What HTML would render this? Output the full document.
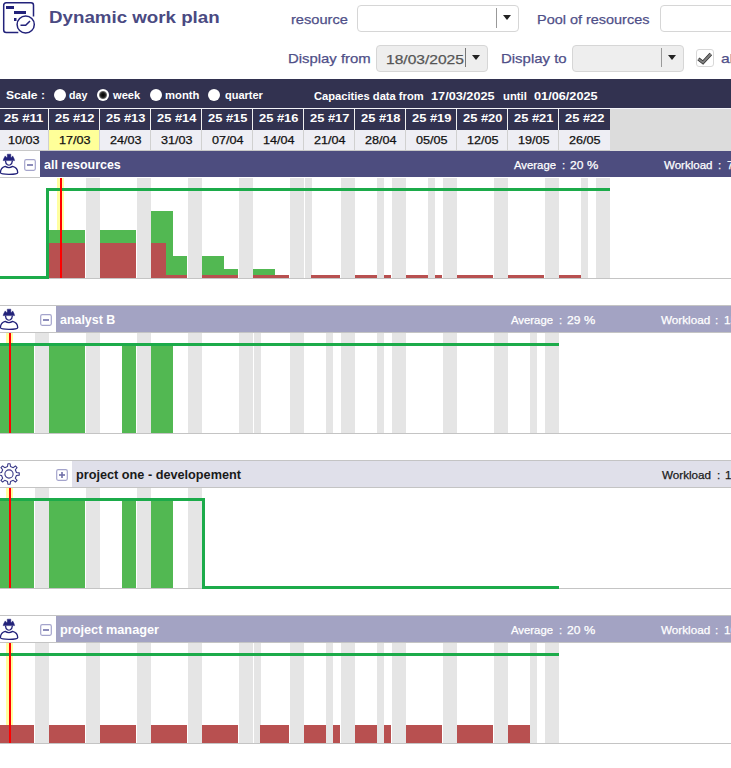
<!DOCTYPE html><html><head><meta charset="utf-8"><style>
html,body{margin:0;padding:0;background:#fff;width:731px;height:768px;overflow:hidden;position:relative;font-family:"Liberation Sans",sans-serif;}
.t{position:absolute;white-space:nowrap;line-height:1;}
.n{-webkit-text-stroke:0.25px currentColor;}
</style></head><body>
<svg style="position:absolute;left:0;top:0" width="40" height="36" viewBox="0 0 40 36">
<g fill="none" stroke="#22227a" stroke-width="1.5">
<path d="M18.3 32.4 H6.2 Q3.7 32.4 3.7 29.9 V5.3 Q3.7 2.8 6.2 2.8 H31 Q33.5 2.8 33.5 5.3 V16.4"/>
<circle cx="25.7" cy="24.5" r="8.6"/>
<path d="M20.5 25.3 H25.7 L30 21"/>
</g>
<g fill="#22227a">
<rect x="6" y="6" width="8" height="3"/>
<rect x="14" y="11" width="12" height="3"/>
<rect x="14" y="18" width="2.5" height="3"/>
</g></svg>
<div class="t" style="left:49.10px;top:9.11px;font-size:17.0px;color:#4a4a82;font-weight:bold;transform:scaleX(1.1016);transform-origin:0 0;">Dynamic work plan</div>
<div class="t n" style="left:290.50px;top:12.57px;font-size:13.5px;color:#4f4f88;font-weight:normal;transform:scaleX(1.0838);transform-origin:0 0;">resource</div>
<div style="position:absolute;left:357px;top:5px;width:160px;height:25px;border:1px solid #d6d6d6;border-radius:4px;background:#fff"></div>
<div style="position:absolute;left:496px;top:8px;width:1px;height:20px;background:#999;"></div>
<div style="position:absolute;left:503px;top:15px;width:0;height:0;border-left:4px solid transparent;border-right:4px solid transparent;border-top:5px solid #222"></div>
<div class="t n" style="left:537.00px;top:12.57px;font-size:13.5px;color:#4f4f88;font-weight:normal;transform:scaleX(1.0700);transform-origin:0 0;">Pool of resources</div>
<div style="position:absolute;left:660px;top:5px;width:160px;height:25px;border:1px solid #d6d6d6;border-radius:4px;background:#fff"></div>
<div class="t n" style="left:288.00px;top:51.97px;font-size:13.5px;color:#4f4f88;font-weight:normal;transform:scaleX(1.1013);transform-origin:0 0;">Display from</div>
<div style="position:absolute;left:376px;top:45px;width:110px;height:25px;border:1px solid #d6d6d6;border-radius:4px;background:#eeeeee"></div>
<div class="t n" style="left:386.40px;top:52.57px;font-size:13.5px;color:#555;font-weight:normal;transform:scaleX(1.1532);transform-origin:0 0;">18/03/2025</div>
<div style="position:absolute;left:465px;top:48px;width:1px;height:19px;background:#777;"></div>
<div style="position:absolute;left:472px;top:55px;width:0;height:0;border-left:4px solid transparent;border-right:4px solid transparent;border-top:5px solid #222"></div>
<div class="t n" style="left:500.90px;top:51.97px;font-size:13.5px;color:#4f4f88;font-weight:normal;transform:scaleX(1.1072);transform-origin:0 0;">Display to</div>
<div style="position:absolute;left:572px;top:45px;width:110px;height:25px;border:1px solid #d6d6d6;border-radius:4px;background:#eeeeee"></div>
<div style="position:absolute;left:661px;top:48px;width:1px;height:19px;background:#999;"></div>
<div style="position:absolute;left:668px;top:55px;width:0;height:0;border-left:4px solid transparent;border-right:4px solid transparent;border-top:5px solid #222"></div>
<div style="position:absolute;left:696px;top:49px;width:16px;height:16px;border:1px solid #d8d8d8;border-radius:3px;background:#fff"></div>
<svg style="position:absolute;left:696px;top:49px" width="18" height="18" viewBox="0 0 18 18"><path d="M2.4 9.9 L7 13.5 L14.8 5" fill="none" stroke="#333" stroke-width="3.4" stroke-linejoin="miter"/><path d="M2.4 9.9 L7 13.5 L14.8 5" fill="none" stroke="#808080" stroke-width="1.9"/></svg>
<div class="t n" style="left:721.00px;top:51.97px;font-size:13.5px;color:#4f4f88;font-weight:normal;transform:scaleX(1.1619);transform-origin:0 0;">al</div>
<div style="position:absolute;left:0px;top:79px;width:731px;height:29px;background:#323250;"></div>
<div style="position:absolute;left:0px;top:108px;width:731px;height:1px;background:#f4f4f8;"></div>
<div class="t" style="left:6.00px;top:89.18px;font-size:11.6px;color:#fff;font-weight:bold;transform:scaleX(1.0428);transform-origin:0 0;">Scale :</div>
<div style="position:absolute;left:54px;top:89px;width:12px;height:12px;border-radius:50%;background:#fff"></div>
<div class="t" style="left:69.40px;top:89.18px;font-size:11.6px;color:#fff;font-weight:bold;transform:scaleX(0.9150);transform-origin:0 0;">day</div>
<div style="position:absolute;left:97px;top:89px;width:12px;height:12px;border-radius:50%;background:radial-gradient(circle,#000 0,#222 2.5px,#666 3.5px,#fff 4.5px)"></div>
<div class="t" style="left:112.75px;top:89.18px;font-size:11.6px;color:#fff;font-weight:bold;transform:scaleX(0.9579);transform-origin:0 0;">week</div>
<div style="position:absolute;left:150px;top:89px;width:12px;height:12px;border-radius:50%;background:#fff"></div>
<div class="t" style="left:164.60px;top:89.18px;font-size:11.6px;color:#fff;font-weight:bold;transform:scaleX(0.9704);transform-origin:0 0;">month</div>
<div style="position:absolute;left:208px;top:89px;width:12px;height:12px;border-radius:50%;background:#fff"></div>
<div class="t" style="left:224.50px;top:89.18px;font-size:11.6px;color:#fff;font-weight:bold;transform:scaleX(0.9487);transform-origin:0 0;">quarter</div>
<div class="t" style="left:313.50px;top:89.98px;font-size:11.6px;color:#fff;font-weight:bold;transform:scaleX(0.9614);transform-origin:0 0;">Capacities data from</div>
<div class="t" style="left:431.40px;top:89.98px;font-size:11.6px;color:#fff;font-weight:bold;transform:scaleX(1.0956);transform-origin:0 0;">17/03/2025</div>
<div class="t" style="left:502.80px;top:89.98px;font-size:11.6px;color:#fff;font-weight:bold;transform:scaleX(0.9714);transform-origin:0 0;">until</div>
<div class="t" style="left:534.00px;top:89.98px;font-size:11.6px;color:#fff;font-weight:bold;transform:scaleX(1.0956);transform-origin:0 0;">01/06/2025</div>
<div style="position:absolute;left:0px;top:109px;width:731px;height:42px;background:#dcdcdc;"></div>
<div style="position:absolute;left:0px;top:109px;width:48px;height:21px;background:#323250;"></div>
<div style="position:absolute;left:0px;top:130px;width:48px;height:20px;background:#eeeef4;"></div>
<div style="position:absolute;left:48px;top:109px;width:1px;height:21px;background:#f0f0f0;"></div>
<div style="position:absolute;left:48px;top:130px;width:1px;height:21px;background:#d0d0d0;"></div>
<div class="t" style="left:4.20px;top:112.18px;font-size:11.6px;color:#fff;font-weight:bold;transform:scaleX(1.1306);transform-origin:0 0;">25 #11</div>
<div class="t n" style="left:8.10px;top:134.08px;font-size:11.6px;color:#111;font-weight:normal;transform:scaleX(1.0878);transform-origin:0 0;">10/03</div>
<div style="position:absolute;left:49px;top:109px;width:50px;height:21px;background:#323250;"></div>
<div style="position:absolute;left:49px;top:130px;width:50px;height:20px;background:#ffff99;"></div>
<div style="position:absolute;left:99px;top:109px;width:1px;height:21px;background:#f0f0f0;"></div>
<div style="position:absolute;left:99px;top:130px;width:1px;height:21px;background:#d0d0d0;"></div>
<div class="t" style="left:55.20px;top:112.18px;font-size:11.6px;color:#fff;font-weight:bold;transform:scaleX(1.1099);transform-origin:0 0;">25 #12</div>
<div class="t n" style="left:59.10px;top:134.08px;font-size:11.6px;color:#111;font-weight:normal;transform:scaleX(1.0878);transform-origin:0 0;">17/03</div>
<div style="position:absolute;left:100px;top:109px;width:50px;height:21px;background:#323250;"></div>
<div style="position:absolute;left:100px;top:130px;width:50px;height:20px;background:#eeeef4;"></div>
<div style="position:absolute;left:150px;top:109px;width:1px;height:21px;background:#f0f0f0;"></div>
<div style="position:absolute;left:150px;top:130px;width:1px;height:21px;background:#d0d0d0;"></div>
<div class="t" style="left:106.20px;top:112.18px;font-size:11.6px;color:#fff;font-weight:bold;transform:scaleX(1.1099);transform-origin:0 0;">25 #13</div>
<div class="t n" style="left:110.10px;top:134.08px;font-size:11.6px;color:#111;font-weight:normal;transform:scaleX(1.0878);transform-origin:0 0;">24/03</div>
<div style="position:absolute;left:151px;top:109px;width:50px;height:21px;background:#323250;"></div>
<div style="position:absolute;left:151px;top:130px;width:50px;height:20px;background:#eeeef4;"></div>
<div style="position:absolute;left:201px;top:109px;width:1px;height:21px;background:#f0f0f0;"></div>
<div style="position:absolute;left:201px;top:130px;width:1px;height:21px;background:#d0d0d0;"></div>
<div class="t" style="left:157.20px;top:112.18px;font-size:11.6px;color:#fff;font-weight:bold;transform:scaleX(1.1099);transform-origin:0 0;">25 #14</div>
<div class="t n" style="left:161.10px;top:134.08px;font-size:11.6px;color:#111;font-weight:normal;transform:scaleX(1.0878);transform-origin:0 0;">31/03</div>
<div style="position:absolute;left:202px;top:109px;width:50px;height:21px;background:#323250;"></div>
<div style="position:absolute;left:202px;top:130px;width:50px;height:20px;background:#eeeef4;"></div>
<div style="position:absolute;left:252px;top:109px;width:1px;height:21px;background:#f0f0f0;"></div>
<div style="position:absolute;left:252px;top:130px;width:1px;height:21px;background:#d0d0d0;"></div>
<div class="t" style="left:208.20px;top:112.18px;font-size:11.6px;color:#fff;font-weight:bold;transform:scaleX(1.1099);transform-origin:0 0;">25 #15</div>
<div class="t n" style="left:212.10px;top:134.08px;font-size:11.6px;color:#111;font-weight:normal;transform:scaleX(1.0878);transform-origin:0 0;">07/04</div>
<div style="position:absolute;left:253px;top:109px;width:50px;height:21px;background:#323250;"></div>
<div style="position:absolute;left:253px;top:130px;width:50px;height:20px;background:#eeeef4;"></div>
<div style="position:absolute;left:303px;top:109px;width:1px;height:21px;background:#f0f0f0;"></div>
<div style="position:absolute;left:303px;top:130px;width:1px;height:21px;background:#d0d0d0;"></div>
<div class="t" style="left:259.20px;top:112.18px;font-size:11.6px;color:#fff;font-weight:bold;transform:scaleX(1.1099);transform-origin:0 0;">25 #16</div>
<div class="t n" style="left:263.10px;top:134.08px;font-size:11.6px;color:#111;font-weight:normal;transform:scaleX(1.0878);transform-origin:0 0;">14/04</div>
<div style="position:absolute;left:304px;top:109px;width:50px;height:21px;background:#323250;"></div>
<div style="position:absolute;left:304px;top:130px;width:50px;height:20px;background:#eeeef4;"></div>
<div style="position:absolute;left:354px;top:109px;width:1px;height:21px;background:#f0f0f0;"></div>
<div style="position:absolute;left:354px;top:130px;width:1px;height:21px;background:#d0d0d0;"></div>
<div class="t" style="left:310.20px;top:112.18px;font-size:11.6px;color:#fff;font-weight:bold;transform:scaleX(1.1099);transform-origin:0 0;">25 #17</div>
<div class="t n" style="left:314.10px;top:134.08px;font-size:11.6px;color:#111;font-weight:normal;transform:scaleX(1.0878);transform-origin:0 0;">21/04</div>
<div style="position:absolute;left:355px;top:109px;width:50px;height:21px;background:#323250;"></div>
<div style="position:absolute;left:355px;top:130px;width:50px;height:20px;background:#eeeef4;"></div>
<div style="position:absolute;left:405px;top:109px;width:1px;height:21px;background:#f0f0f0;"></div>
<div style="position:absolute;left:405px;top:130px;width:1px;height:21px;background:#d0d0d0;"></div>
<div class="t" style="left:361.20px;top:112.18px;font-size:11.6px;color:#fff;font-weight:bold;transform:scaleX(1.1099);transform-origin:0 0;">25 #18</div>
<div class="t n" style="left:365.10px;top:134.08px;font-size:11.6px;color:#111;font-weight:normal;transform:scaleX(1.0878);transform-origin:0 0;">28/04</div>
<div style="position:absolute;left:406px;top:109px;width:50px;height:21px;background:#323250;"></div>
<div style="position:absolute;left:406px;top:130px;width:50px;height:20px;background:#eeeef4;"></div>
<div style="position:absolute;left:456px;top:109px;width:1px;height:21px;background:#f0f0f0;"></div>
<div style="position:absolute;left:456px;top:130px;width:1px;height:21px;background:#d0d0d0;"></div>
<div class="t" style="left:412.20px;top:112.18px;font-size:11.6px;color:#fff;font-weight:bold;transform:scaleX(1.1099);transform-origin:0 0;">25 #19</div>
<div class="t n" style="left:416.10px;top:134.08px;font-size:11.6px;color:#111;font-weight:normal;transform:scaleX(1.0878);transform-origin:0 0;">05/05</div>
<div style="position:absolute;left:457px;top:109px;width:50px;height:21px;background:#323250;"></div>
<div style="position:absolute;left:457px;top:130px;width:50px;height:20px;background:#eeeef4;"></div>
<div style="position:absolute;left:507px;top:109px;width:1px;height:21px;background:#f0f0f0;"></div>
<div style="position:absolute;left:507px;top:130px;width:1px;height:21px;background:#d0d0d0;"></div>
<div class="t" style="left:463.20px;top:112.18px;font-size:11.6px;color:#fff;font-weight:bold;transform:scaleX(1.1099);transform-origin:0 0;">25 #20</div>
<div class="t n" style="left:467.10px;top:134.08px;font-size:11.6px;color:#111;font-weight:normal;transform:scaleX(1.0878);transform-origin:0 0;">12/05</div>
<div style="position:absolute;left:508px;top:109px;width:50px;height:21px;background:#323250;"></div>
<div style="position:absolute;left:508px;top:130px;width:50px;height:20px;background:#eeeef4;"></div>
<div style="position:absolute;left:558px;top:109px;width:1px;height:21px;background:#f0f0f0;"></div>
<div style="position:absolute;left:558px;top:130px;width:1px;height:21px;background:#d0d0d0;"></div>
<div class="t" style="left:514.20px;top:112.18px;font-size:11.6px;color:#fff;font-weight:bold;transform:scaleX(1.1099);transform-origin:0 0;">25 #21</div>
<div class="t n" style="left:518.10px;top:134.08px;font-size:11.6px;color:#111;font-weight:normal;transform:scaleX(1.0878);transform-origin:0 0;">19/05</div>
<div style="position:absolute;left:559px;top:109px;width:50px;height:21px;background:#323250;"></div>
<div style="position:absolute;left:559px;top:130px;width:50px;height:20px;background:#eeeef4;"></div>
<div style="position:absolute;left:609px;top:109px;width:1px;height:21px;background:#323250;"></div>
<div style="position:absolute;left:609px;top:130px;width:1px;height:20px;background:#eeeef4;"></div>
<div class="t" style="left:565.20px;top:112.18px;font-size:11.6px;color:#fff;font-weight:bold;transform:scaleX(1.1099);transform-origin:0 0;">25 #22</div>
<div class="t n" style="left:569.10px;top:134.08px;font-size:11.6px;color:#111;font-weight:normal;transform:scaleX(1.0878);transform-origin:0 0;">26/05</div>
<div style="position:absolute;left:0px;top:150px;width:610px;height:1px;background:#c8c8c8;"></div>
<div style="position:absolute;left:0px;top:151px;width:40px;height:26px;background:#fff;"></div>
<div style="position:absolute;left:40px;top:151px;width:691px;height:26px;background:#4d4d7f;"></div>
<div style="position:absolute;left:0px;top:177px;width:40px;height:1px;background:#c8c8c8;"></div>
<svg style="position:absolute;left:0px;top:152px" width="20" height="24" viewBox="0 0 20 24">
<path d="M3.1 8.6 L3.8 6.6 L5.2 3.9 L6.5 5.6 L7.3 5.3 V2.2 H10.8 V5.3 L11.5 5.6 L12.7 3.9 L14 6.6 L14.6 8.6 Z" fill="#22227a" stroke="#22227a" stroke-width="0.5" stroke-linejoin="round"/>
<path d="M5.4 8.6 Q5.6 11.5 7.5 12.8 Q8.9 13.6 10.3 12.8 Q12.2 11.5 12.4 8.6" fill="none" stroke="#22227a" stroke-width="1.3"/>
<path d="M5.2 14.4 Q8.9 16.8 12.6 14.4 Q17.6 15.6 17.7 20.6 Q17.6 22.2 9 22.3 Q0.4 22.2 0.4 20.6 Q0.6 15.6 5.2 14.4 Z" fill="none" stroke="#22227a" stroke-width="1.3"/>
</svg>
<svg style="position:absolute;left:24px;top:159px" width="12" height="12" viewBox="0 0 12 12">
<rect x="0.7" y="0.7" width="10.6" height="10.6" rx="1.5" fill="#fff" stroke="#a4a4cc" stroke-width="1.2"/>
<rect x="3" y="5.2" width="6" height="1.6" fill="#7070a8"/></svg>
<div class="t" style="left:43.90px;top:158.74px;font-size:12px;color:#fff;font-weight:bold;transform:scaleX(1.0371);transform-origin:0 0;">all resources</div>
<div class="t n" style="left:514.20px;top:159.28px;font-size:11.6px;color:#fff;font-weight:normal;transform:scaleX(0.9767);transform-origin:0 0;">Average</div>
<div class="t n" style="left:561.60px;top:159.28px;font-size:11.6px;color:#fff;font-weight:normal;transform:scaleX(0.9767);transform-origin:0 0;">:</div>
<div class="t n" style="left:569.60px;top:159.28px;font-size:11.6px;color:#fff;font-weight:normal;transform:scaleX(1.0388);transform-origin:0 0;">20</div>
<div class="t n" style="left:587.00px;top:159.28px;font-size:11.6px;color:#fff;font-weight:normal;transform:scaleX(1.0971);transform-origin:0 0;">%</div>
<div class="t n" style="left:664.30px;top:159.28px;font-size:11.6px;color:#fff;font-weight:normal;transform:scaleX(0.9939);transform-origin:0 0;">Workload</div>
<div class="t n" style="left:718.40px;top:159.28px;font-size:11.6px;color:#fff;font-weight:normal;transform:scaleX(0.9939);transform-origin:0 0;">:</div>
<div class="t n" style="left:727.00px;top:159.28px;font-size:11.6px;color:#fff;font-weight:normal;transform:scaleX(0.9939);transform-origin:0 0;">7</div>
<div style="position:absolute;left:86px;top:178px;width:14px;height:100px;background:#e5e5e5;"></div>
<div style="position:absolute;left:137px;top:178px;width:14px;height:100px;background:#e5e5e5;"></div>
<div style="position:absolute;left:188px;top:178px;width:14px;height:100px;background:#e5e5e5;"></div>
<div style="position:absolute;left:239px;top:178px;width:14px;height:100px;background:#e5e5e5;"></div>
<div style="position:absolute;left:290px;top:178px;width:14px;height:100px;background:#e5e5e5;"></div>
<div style="position:absolute;left:305px;top:178px;width:7px;height:100px;background:#e5e5e5;"></div>
<div style="position:absolute;left:341px;top:178px;width:14px;height:100px;background:#e5e5e5;"></div>
<div style="position:absolute;left:377px;top:178px;width:7px;height:100px;background:#e5e5e5;"></div>
<div style="position:absolute;left:392px;top:178px;width:14px;height:100px;background:#e5e5e5;"></div>
<div style="position:absolute;left:428px;top:178px;width:7px;height:100px;background:#e5e5e5;"></div>
<div style="position:absolute;left:443px;top:178px;width:14px;height:100px;background:#e5e5e5;"></div>
<div style="position:absolute;left:494px;top:178px;width:14px;height:100px;background:#e5e5e5;"></div>
<div style="position:absolute;left:545px;top:178px;width:14px;height:100px;background:#e5e5e5;"></div>
<div style="position:absolute;left:581px;top:178px;width:7px;height:100px;background:#e5e5e5;"></div>
<div style="position:absolute;left:596px;top:178px;width:14px;height:100px;background:#e5e5e5;"></div>
<div style="position:absolute;left:57px;top:178px;width:7px;height:100px;background:#ffffa0;"></div>
<div style="position:absolute;left:49px;top:230px;width:36px;height:48px;background:#52b852;"></div>
<div style="position:absolute;left:100px;top:230px;width:36px;height:48px;background:#52b852;"></div>
<div style="position:absolute;left:151px;top:211px;width:22px;height:67px;background:#52b852;"></div>
<div style="position:absolute;left:173px;top:256px;width:14px;height:22px;background:#52b852;"></div>
<div style="position:absolute;left:202px;top:256px;width:22px;height:22px;background:#52b852;"></div>
<div style="position:absolute;left:224px;top:269px;width:14px;height:9px;background:#52b852;"></div>
<div style="position:absolute;left:253px;top:269px;width:22px;height:9px;background:#52b852;"></div>
<div style="position:absolute;left:49px;top:243px;width:36px;height:35px;background:#b85050;"></div>
<div style="position:absolute;left:100px;top:243px;width:36px;height:35px;background:#b85050;"></div>
<div style="position:absolute;left:151px;top:243px;width:15px;height:35px;background:#b85050;"></div>
<div style="position:absolute;left:166px;top:275px;width:21px;height:3px;background:#b85050;"></div>
<div style="position:absolute;left:202px;top:275px;width:36px;height:3px;background:#b85050;"></div>
<div style="position:absolute;left:253px;top:275px;width:36px;height:3px;background:#b85050;"></div>
<div style="position:absolute;left:311px;top:275px;width:29px;height:3px;background:#b85050;"></div>
<div style="position:absolute;left:355px;top:275px;width:22px;height:3px;background:#b85050;"></div>
<div style="position:absolute;left:384px;top:275px;width:7px;height:3px;background:#b85050;"></div>
<div style="position:absolute;left:406px;top:275px;width:22px;height:3px;background:#b85050;"></div>
<div style="position:absolute;left:435px;top:275px;width:7px;height:3px;background:#b85050;"></div>
<div style="position:absolute;left:457px;top:275px;width:36px;height:3px;background:#b85050;"></div>
<div style="position:absolute;left:508px;top:275px;width:36px;height:3px;background:#b85050;"></div>
<div style="position:absolute;left:559px;top:275px;width:22px;height:3px;background:#b85050;"></div>
<div style="position:absolute;left:0px;top:278px;width:731px;height:1px;background:#c4c4c4;"></div>
<div style="position:absolute;left:0px;top:276px;width:49px;height:3px;background:#1cab4a;"></div>
<div style="position:absolute;left:46px;top:188px;width:3px;height:91px;background:#1cab4a;"></div>
<div style="position:absolute;left:46px;top:188px;width:564px;height:3px;background:#1cab4a;"></div>
<div style="position:absolute;left:60px;top:178px;width:2px;height:100px;background:#ff0000;"></div>
<div style="position:absolute;left:0px;top:305px;width:731px;height:1px;background:#c4c4c4;"></div>
<div style="position:absolute;left:56px;top:306px;width:675px;height:26px;background:#a3a3c3;"></div>
<div style="position:absolute;left:0px;top:332px;width:731px;height:1px;background:#c4c4c4;"></div>
<svg style="position:absolute;left:0px;top:307px" width="20" height="24" viewBox="0 0 20 24">
<path d="M3.1 8.6 L3.8 6.6 L5.2 3.9 L6.5 5.6 L7.3 5.3 V2.2 H10.8 V5.3 L11.5 5.6 L12.7 3.9 L14 6.6 L14.6 8.6 Z" fill="#22227a" stroke="#22227a" stroke-width="0.5" stroke-linejoin="round"/>
<path d="M5.4 8.6 Q5.6 11.5 7.5 12.8 Q8.9 13.6 10.3 12.8 Q12.2 11.5 12.4 8.6" fill="none" stroke="#22227a" stroke-width="1.3"/>
<path d="M5.2 14.4 Q8.9 16.8 12.6 14.4 Q17.6 15.6 17.7 20.6 Q17.6 22.2 9 22.3 Q0.4 22.2 0.4 20.6 Q0.6 15.6 5.2 14.4 Z" fill="none" stroke="#22227a" stroke-width="1.3"/>
</svg>
<svg style="position:absolute;left:40px;top:314px" width="12" height="12" viewBox="0 0 12 12">
<rect x="0.7" y="0.7" width="10.6" height="10.6" rx="1.5" fill="#fff" stroke="#a4a4cc" stroke-width="1.2"/>
<rect x="3" y="5.2" width="6" height="1.6" fill="#7070a8"/></svg>
<div class="t" style="left:60.00px;top:313.84px;font-size:12px;color:#fff;font-weight:bold;transform:scaleX(1.0347);transform-origin:0 0;">analyst B</div>
<div class="t n" style="left:511.20px;top:314.18px;font-size:11.6px;color:#fff;font-weight:normal;transform:scaleX(0.9767);transform-origin:0 0;">Average</div>
<div class="t n" style="left:558.60px;top:314.18px;font-size:11.6px;color:#fff;font-weight:normal;transform:scaleX(0.9767);transform-origin:0 0;">:</div>
<div class="t n" style="left:566.60px;top:314.18px;font-size:11.6px;color:#fff;font-weight:normal;transform:scaleX(1.0388);transform-origin:0 0;">29</div>
<div class="t n" style="left:584.00px;top:314.18px;font-size:11.6px;color:#fff;font-weight:normal;transform:scaleX(1.0971);transform-origin:0 0;">%</div>
<div class="t n" style="left:661.10px;top:314.18px;font-size:11.6px;color:#fff;font-weight:normal;transform:scaleX(1.0102);transform-origin:0 0;">Workload</div>
<div class="t n" style="left:715.40px;top:314.18px;font-size:11.6px;color:#fff;font-weight:normal;transform:scaleX(1.0102);transform-origin:0 0;">:</div>
<div class="t n" style="left:724.00px;top:314.18px;font-size:11.6px;color:#fff;font-weight:normal;transform:scaleX(1.0102);transform-origin:0 0;">15</div>
<div style="position:absolute;left:35px;top:333px;width:14px;height:100px;background:#e5e5e5;"></div>
<div style="position:absolute;left:86px;top:333px;width:14px;height:100px;background:#e5e5e5;"></div>
<div style="position:absolute;left:137px;top:333px;width:14px;height:100px;background:#e5e5e5;"></div>
<div style="position:absolute;left:188px;top:333px;width:14px;height:100px;background:#e5e5e5;"></div>
<div style="position:absolute;left:239px;top:333px;width:14px;height:100px;background:#e5e5e5;"></div>
<div style="position:absolute;left:254px;top:333px;width:7px;height:100px;background:#e5e5e5;"></div>
<div style="position:absolute;left:290px;top:333px;width:14px;height:100px;background:#e5e5e5;"></div>
<div style="position:absolute;left:326px;top:333px;width:7px;height:100px;background:#e5e5e5;"></div>
<div style="position:absolute;left:341px;top:333px;width:14px;height:100px;background:#e5e5e5;"></div>
<div style="position:absolute;left:377px;top:333px;width:7px;height:100px;background:#e5e5e5;"></div>
<div style="position:absolute;left:392px;top:333px;width:14px;height:100px;background:#e5e5e5;"></div>
<div style="position:absolute;left:443px;top:333px;width:14px;height:100px;background:#e5e5e5;"></div>
<div style="position:absolute;left:494px;top:333px;width:14px;height:100px;background:#e5e5e5;"></div>
<div style="position:absolute;left:530px;top:333px;width:7px;height:100px;background:#e5e5e5;"></div>
<div style="position:absolute;left:545px;top:333px;width:14px;height:100px;background:#e5e5e5;"></div>
<div style="position:absolute;left:6px;top:333px;width:7px;height:100px;background:#ffffa0;"></div>
<div style="position:absolute;left:0px;top:346px;width:34px;height:87px;background:#52b852;"></div>
<div style="position:absolute;left:49px;top:346px;width:36px;height:87px;background:#52b852;"></div>
<div style="position:absolute;left:122px;top:346px;width:14px;height:87px;background:#52b852;"></div>
<div style="position:absolute;left:151px;top:346px;width:22px;height:87px;background:#52b852;"></div>
<div style="position:absolute;left:0px;top:433px;width:731px;height:1px;background:#c4c4c4;"></div>
<div style="position:absolute;left:0px;top:343px;width:559px;height:3px;background:#1cab4a;"></div>
<div style="position:absolute;left:9px;top:333px;width:2px;height:100px;background:#ff0000;"></div>
<div style="position:absolute;left:0px;top:460px;width:731px;height:1px;background:#c4c4c4;"></div>
<div style="position:absolute;left:72px;top:461px;width:659px;height:26px;background:#e0e0ea;"></div>
<div style="position:absolute;left:0px;top:487px;width:731px;height:1px;background:#c4c4c4;"></div>
<svg style="position:absolute;left:0px;top:460px" width="22" height="28" viewBox="0 0 22 28">
<path d="M16.45 12.52 L19.24 12.87 L19.24 15.13 L16.45 15.48 L15.32 18.22 L17.04 20.44 L15.44 22.04 L13.22 20.32 L10.48 21.45 L10.13 24.24 L7.87 24.24 L7.52 21.45 L4.78 20.32 L2.56 22.04 L0.96 20.44 L2.68 18.22 L1.55 15.48 L-1.24 15.13 L-1.24 12.87 L1.55 12.52 L2.68 9.78 L0.96 7.56 L2.56 5.96 L4.78 7.68 L7.52 6.55 L7.87 3.76 L10.13 3.76 L10.48 6.55 L13.22 7.68 L15.44 5.96 L17.04 7.56 L15.32 9.78Z" fill="none" stroke="#3a3a88" stroke-width="1.1" stroke-linejoin="round"/>
<circle cx="9" cy="14" r="4.1" fill="none" stroke="#3a3a88" stroke-width="1.1"/></svg>
<svg style="position:absolute;left:56px;top:469px" width="12" height="12" viewBox="0 0 12 12">
<rect x="0.7" y="0.7" width="10.6" height="10.6" rx="1.5" fill="#fff" stroke="#a4a4cc" stroke-width="1.2"/>
<rect x="3" y="5.2" width="6" height="1.6" fill="#7070a8"/><rect x="5.2" y="3" width="1.6" height="6" fill="#7070a8"/></svg>
<div class="t" style="left:76.20px;top:469.04px;font-size:12px;color:#1a1a1a;font-weight:bold;transform:scaleX(1.0574);transform-origin:0 0;">project one - developement</div>
<div class="t n" style="left:662.20px;top:469.38px;font-size:11.6px;color:#1a1a1a;font-weight:normal;transform:scaleX(1.0061);transform-origin:0 0;">Workload</div>
<div class="t n" style="left:716.50px;top:469.38px;font-size:11.6px;color:#1a1a1a;font-weight:normal;transform:scaleX(1.0061);transform-origin:0 0;">:</div>
<div class="t n" style="left:725.40px;top:469.38px;font-size:11.6px;color:#1a1a1a;font-weight:normal;transform:scaleX(1.0061);transform-origin:0 0;">1</div>
<div style="position:absolute;left:35px;top:488px;width:14px;height:100px;background:#e5e5e5;"></div>
<div style="position:absolute;left:86px;top:488px;width:14px;height:100px;background:#e5e5e5;"></div>
<div style="position:absolute;left:137px;top:488px;width:14px;height:100px;background:#e5e5e5;"></div>
<div style="position:absolute;left:188px;top:488px;width:14px;height:100px;background:#e5e5e5;"></div>
<div style="position:absolute;left:6px;top:488px;width:7px;height:100px;background:#ffffa0;"></div>
<div style="position:absolute;left:0px;top:501px;width:34px;height:87px;background:#52b852;"></div>
<div style="position:absolute;left:49px;top:501px;width:36px;height:87px;background:#52b852;"></div>
<div style="position:absolute;left:122px;top:501px;width:14px;height:87px;background:#52b852;"></div>
<div style="position:absolute;left:151px;top:501px;width:22px;height:87px;background:#52b852;"></div>
<div style="position:absolute;left:0px;top:588px;width:731px;height:1px;background:#c4c4c4;"></div>
<div style="position:absolute;left:0px;top:498px;width:205px;height:3px;background:#1cab4a;"></div>
<div style="position:absolute;left:202px;top:498px;width:3px;height:91px;background:#1cab4a;"></div>
<div style="position:absolute;left:202px;top:586px;width:357px;height:3px;background:#1cab4a;"></div>
<div style="position:absolute;left:9px;top:488px;width:2px;height:100px;background:#ff0000;"></div>
<div style="position:absolute;left:0px;top:615px;width:731px;height:1px;background:#c4c4c4;"></div>
<div style="position:absolute;left:56px;top:616px;width:675px;height:26px;background:#a3a3c3;"></div>
<div style="position:absolute;left:0px;top:642px;width:731px;height:1px;background:#c4c4c4;"></div>
<svg style="position:absolute;left:0px;top:617px" width="20" height="24" viewBox="0 0 20 24">
<path d="M3.1 8.6 L3.8 6.6 L5.2 3.9 L6.5 5.6 L7.3 5.3 V2.2 H10.8 V5.3 L11.5 5.6 L12.7 3.9 L14 6.6 L14.6 8.6 Z" fill="#22227a" stroke="#22227a" stroke-width="0.5" stroke-linejoin="round"/>
<path d="M5.4 8.6 Q5.6 11.5 7.5 12.8 Q8.9 13.6 10.3 12.8 Q12.2 11.5 12.4 8.6" fill="none" stroke="#22227a" stroke-width="1.3"/>
<path d="M5.2 14.4 Q8.9 16.8 12.6 14.4 Q17.6 15.6 17.7 20.6 Q17.6 22.2 9 22.3 Q0.4 22.2 0.4 20.6 Q0.6 15.6 5.2 14.4 Z" fill="none" stroke="#22227a" stroke-width="1.3"/>
</svg>
<svg style="position:absolute;left:40px;top:624px" width="12" height="12" viewBox="0 0 12 12">
<rect x="0.7" y="0.7" width="10.6" height="10.6" rx="1.5" fill="#fff" stroke="#a4a4cc" stroke-width="1.2"/>
<rect x="3" y="5.2" width="6" height="1.6" fill="#7070a8"/></svg>
<div class="t" style="left:60.20px;top:623.84px;font-size:12px;color:#fff;font-weight:bold;transform:scaleX(1.0605);transform-origin:0 0;">project manager</div>
<div class="t n" style="left:511.20px;top:624.18px;font-size:11.6px;color:#fff;font-weight:normal;transform:scaleX(0.9767);transform-origin:0 0;">Average</div>
<div class="t n" style="left:558.60px;top:624.18px;font-size:11.6px;color:#fff;font-weight:normal;transform:scaleX(0.9767);transform-origin:0 0;">:</div>
<div class="t n" style="left:566.60px;top:624.18px;font-size:11.6px;color:#fff;font-weight:normal;transform:scaleX(1.0388);transform-origin:0 0;">20</div>
<div class="t n" style="left:584.00px;top:624.18px;font-size:11.6px;color:#fff;font-weight:normal;transform:scaleX(1.0971);transform-origin:0 0;">%</div>
<div class="t n" style="left:661.10px;top:624.18px;font-size:11.6px;color:#fff;font-weight:normal;transform:scaleX(1.0102);transform-origin:0 0;">Workload</div>
<div class="t n" style="left:715.40px;top:624.18px;font-size:11.6px;color:#fff;font-weight:normal;transform:scaleX(1.0102);transform-origin:0 0;">:</div>
<div class="t n" style="left:724.00px;top:624.18px;font-size:11.6px;color:#fff;font-weight:normal;transform:scaleX(1.0102);transform-origin:0 0;">10</div>
<div style="position:absolute;left:35px;top:643px;width:14px;height:100px;background:#e5e5e5;"></div>
<div style="position:absolute;left:86px;top:643px;width:14px;height:100px;background:#e5e5e5;"></div>
<div style="position:absolute;left:137px;top:643px;width:14px;height:100px;background:#e5e5e5;"></div>
<div style="position:absolute;left:188px;top:643px;width:14px;height:100px;background:#e5e5e5;"></div>
<div style="position:absolute;left:239px;top:643px;width:14px;height:100px;background:#e5e5e5;"></div>
<div style="position:absolute;left:254px;top:643px;width:7px;height:100px;background:#e5e5e5;"></div>
<div style="position:absolute;left:290px;top:643px;width:14px;height:100px;background:#e5e5e5;"></div>
<div style="position:absolute;left:326px;top:643px;width:7px;height:100px;background:#e5e5e5;"></div>
<div style="position:absolute;left:341px;top:643px;width:14px;height:100px;background:#e5e5e5;"></div>
<div style="position:absolute;left:377px;top:643px;width:7px;height:100px;background:#e5e5e5;"></div>
<div style="position:absolute;left:392px;top:643px;width:14px;height:100px;background:#e5e5e5;"></div>
<div style="position:absolute;left:443px;top:643px;width:14px;height:100px;background:#e5e5e5;"></div>
<div style="position:absolute;left:494px;top:643px;width:14px;height:100px;background:#e5e5e5;"></div>
<div style="position:absolute;left:530px;top:643px;width:7px;height:100px;background:#e5e5e5;"></div>
<div style="position:absolute;left:545px;top:643px;width:14px;height:100px;background:#e5e5e5;"></div>
<div style="position:absolute;left:6px;top:643px;width:7px;height:100px;background:#ffffa0;"></div>
<div style="position:absolute;left:0px;top:725px;width:34px;height:18px;background:#b85050;"></div>
<div style="position:absolute;left:49px;top:725px;width:36px;height:18px;background:#b85050;"></div>
<div style="position:absolute;left:100px;top:725px;width:36px;height:18px;background:#b85050;"></div>
<div style="position:absolute;left:151px;top:725px;width:36px;height:18px;background:#b85050;"></div>
<div style="position:absolute;left:202px;top:725px;width:36px;height:18px;background:#b85050;"></div>
<div style="position:absolute;left:260px;top:725px;width:29px;height:18px;background:#b85050;"></div>
<div style="position:absolute;left:304px;top:725px;width:22px;height:18px;background:#b85050;"></div>
<div style="position:absolute;left:333px;top:725px;width:7px;height:18px;background:#b85050;"></div>
<div style="position:absolute;left:355px;top:725px;width:22px;height:18px;background:#b85050;"></div>
<div style="position:absolute;left:384px;top:725px;width:7px;height:18px;background:#b85050;"></div>
<div style="position:absolute;left:406px;top:725px;width:36px;height:18px;background:#b85050;"></div>
<div style="position:absolute;left:457px;top:725px;width:36px;height:18px;background:#b85050;"></div>
<div style="position:absolute;left:508px;top:725px;width:22px;height:18px;background:#b85050;"></div>
<div style="position:absolute;left:0px;top:743px;width:731px;height:1px;background:#c4c4c4;"></div>
<div style="position:absolute;left:0px;top:653px;width:559px;height:3px;background:#1cab4a;"></div>
<div style="position:absolute;left:9px;top:643px;width:2px;height:100px;background:#ff0000;"></div>
</body></html>
